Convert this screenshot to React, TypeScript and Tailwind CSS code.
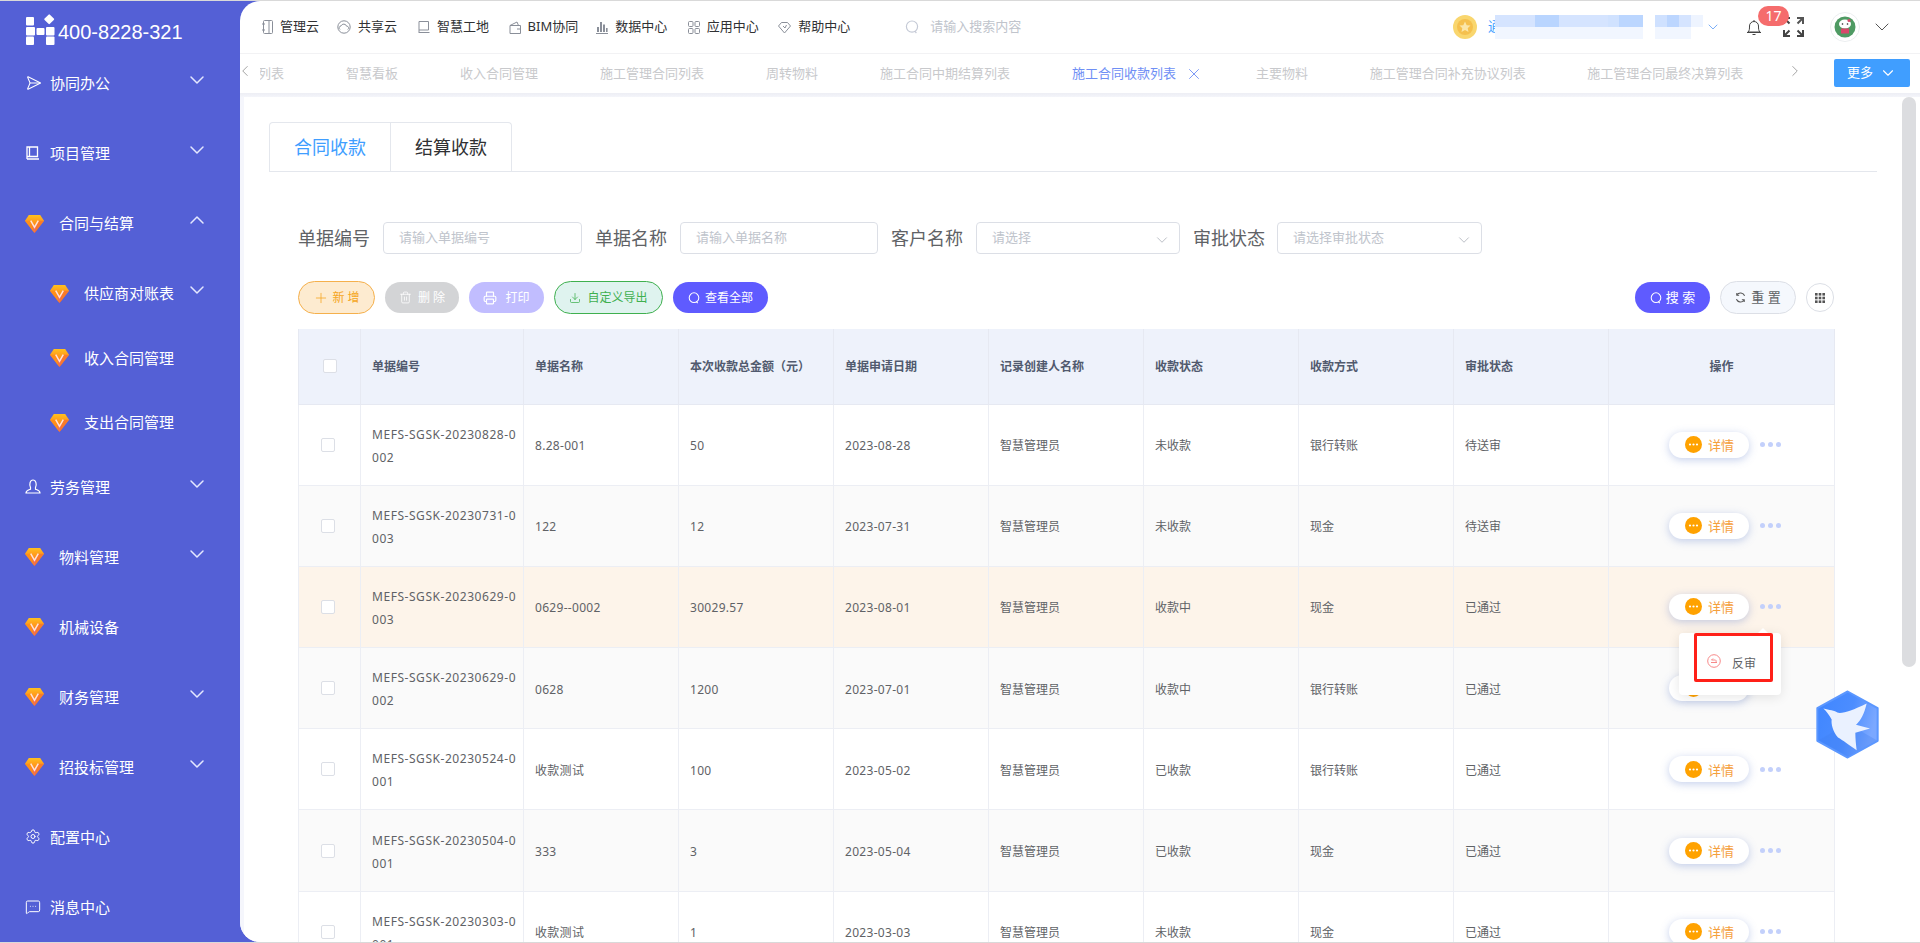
import React from "react";
import { ChevronDown, ChevronUp, ChevronLeft, ChevronRight, Send, Settings, MessageSquareMore, Plus, Trash2, Printer, Download, X } from "lucide-react";

function Gem() {
  return (
    <svg width="19" height="19" viewBox="0 0 20 20" className="shrink-0">
      <defs>
        <linearGradient id="gemG" x1="0" y1="0" x2="0" y2="1">
          <stop offset="0" stopColor="#ffc11e" />
          <stop offset="0.55" stopColor="#ff8a1c" />
          <stop offset="1" stopColor="#ee5a3c" />
        </linearGradient>
      </defs>
      <polygon points="4,1 16,1 20,7 10,20 0,7" fill="url(#gemG)" />
      <polygon points="0,7 6,7 10,20" fill="#ff8f17" />
      <polygon points="20,7 14,7 10,20" fill="#f97a2a" />
      <polygon points="6,7 10,14 14,7 10,20" fill="#f0705a" />
      <path d="M6 7 L10 14 L14 7" fill="none" stroke="#ffe5d8" strokeWidth="1.6" />
    </svg>
  );
}

function Q({ className = "" }: { className?: string }) {
  return (
    <svg viewBox="0 0 14 14" className={className} fill="none" stroke="currentColor" strokeWidth="1.2">
      <circle cx="7" cy="6.6" r="5.6" />
      <path d="M9.8 11.2 L11.4 13" />
    </svg>
  );
}

const ic = "shrink-0 text-[#8a8f99]";
const topNav: { label: string; icon: React.ReactNode; gap: string }[] = [
  {
    label: "管理云",
    gap: "mr-[18px]",
    icon: (
      <svg width="11" height="14" viewBox="0 0 11 14" fill="none" stroke="currentColor" className={ic}>
        <rect x="1.5" y="0.5" width="9" height="13" rx="1" />
        <path d="M7 1v12M0 4h3M0 10h3" />
      </svg>
    ),
  },
  {
    label: "共享云",
    gap: "mr-[21px]",
    icon: (
      <svg width="14" height="14" viewBox="0 0 14 14" fill="none" stroke="currentColor" className={ic}>
        <circle cx="7" cy="7" r="6.2" />
        <path d="M3 9.5a2 2 0 0 1 1-3.6 3 3 0 0 1 5.6 0.3 1.8 1.8 0 0 1 1.2 3.3" />
      </svg>
    ),
  },
  {
    label: "智慧工地",
    gap: "mr-[19.5px]",
    icon: (
      <svg width="12" height="14" viewBox="0 0 12 14" fill="none" stroke="currentColor" className={ic}>
        <path d="M1 13V1.5h9.5V10H1M1 12.5h10.5" />
      </svg>
    ),
  },
  {
    label: "BIM协同",
    gap: "mr-[18px]",
    icon: (
      <svg width="12" height="13" viewBox="0 0 12 13" fill="none" stroke="currentColor" className={ic}>
        <path d="M1 4.5h10.5v8H1zM1 4.5 8 1l1.5 3.5M8 8h3.5" />
      </svg>
    ),
  },
  {
    label: "数据中心",
    gap: "mr-[20.5px]",
    icon: (
      <svg width="12" height="13" viewBox="0 0 12 13" fill="currentColor" className={ic}>
        <rect x="1" y="6" width="2" height="5" />
        <rect x="4" y="1" width="2" height="10" />
        <rect x="7" y="3.5" width="2" height="7.5" />
        <rect x="10" y="7" width="1.6" height="4" />
        <rect x="0" y="12" width="12" height="1" />
      </svg>
    ),
  },
  {
    label: "应用中心",
    gap: "mr-[19.5px]",
    icon: (
      <svg width="12" height="13" viewBox="0 0 12 13" fill="none" stroke="currentColor" className={ic}>
        <rect x="0.5" y="0.5" width="4.5" height="5" rx="1" />
        <rect x="7" y="0.5" width="4.5" height="5" rx="1" />
        <rect x="0.5" y="7.5" width="4.5" height="5" rx="1" />
        <rect x="7" y="7.5" width="4.5" height="5" rx="1" />
      </svg>
    ),
  },
  {
    label: "帮助中心",
    gap: "mr-[55px]",
    icon: (
      <svg width="13" height="13" viewBox="0 0 13 13" fill="none" stroke="currentColor" className={ic}>
        <path d="M3.5 1.5h6l3 3.5-6 7-6-7zM5 5l2 2 1.5-3" />
      </svg>
    ),
  },
];

const tabsList = ["列表", "智慧看板", "收入合同管理", "施工管理合同列表", "周转物料", "施工合同中期结算列表"];
const tabsList2 = ["主要物料", "施工管理合同补充协议列表", "施工管理合同最终决算列表"];

const side1 = [
  { label: "协同办公", icon: <Send size={18} strokeWidth={1.5} className="rotate-45 -translate-x-[2px]" /> },
  {
    label: "项目管理",
    icon: (
      <svg width="14" height="14" viewBox="0 0 14 14" fill="none" stroke="currentColor" strokeWidth="1.3">
        <path d="M1 13V1h10.5v9.5H1M1 13h12" />
        <path d="M3.5 1v9" />
      </svg>
    ),
  },
];
const side2 = [
  {
    label: "劳务管理",
    icon: (
      <svg width="16" height="15" viewBox="0 0 16 15" fill="none" stroke="currentColor" strokeWidth="1.2">
        <path d="M5.5 8.500C4 5.500 5 1 8 1s4 4.500 2.500 7.500L10.500 10.200C12.500 11 15 11.500 15 14H1C1 11.500 3.500 11 5.500 10.200Z" />
      </svg>
    ),
    chev: true,
    gem: false,
  },
  { label: "物料管理", gem: true, chev: true },
  { label: "机械设备", gem: true, chev: false },
  { label: "财务管理", gem: true, chev: true },
  { label: "招投标管理", gem: true, chev: true },
  { label: "配置中心", icon: <Settings size={17} strokeWidth={1.5} />, chev: false, gem: false },
  { label: "消息中心", icon: <MessageSquareMore size={18} strokeWidth={1.5} />, chev: false, gem: false },
];

const Chev = ({ up }: { up?: boolean }) =>
  up ? (
    <ChevronUp size={24} strokeWidth={1.5} className="ml-auto mr-[31px] -mt-[6px] shrink-0 text-[#e4e8ff]" />
  ) : (
    <ChevronDown size={24} strokeWidth={1.5} className="ml-auto mr-[31px] -mt-[6px] shrink-0 text-[#e4e8ff]" />
  );

const rows = [
  ["MEFS-SGSK-20230828-0", "002", "8.28-001", "50", "2023-08-28", "未收款", "银行转账", "待送审"],
  ["MEFS-SGSK-20230731-0", "003", "122", "12", "2023-07-31", "未收款", "现金", "待送审"],
  ["MEFS-SGSK-20230629-0", "003", "0629--0002", "30029.57", "2023-08-01", "收款中", "现金", "已通过"],
  ["MEFS-SGSK-20230629-0", "002", "0628", "1200", "2023-07-01", "收款中", "银行转账", "已通过"],
  ["MEFS-SGSK-20230524-0", "001", "收款测试", "100", "2023-05-02", "已收款", "银行转账", "已通过"],
  ["MEFS-SGSK-20230504-0", "001", "333", "3", "2023-05-04", "已收款", "现金", "已通过"],
  ["MEFS-SGSK-20230303-0", "001", "收款测试", "1", "2023-03-03", "未收款", "现金", "已通过"],
];
const rowBg = ["bg-white", "bg-[#fafafa]", "bg-[#fdf4ea]", "bg-[#fafafa]", "bg-white", "bg-[#fafafa]", "bg-white"];
const heads = ["单据编号", "单据名称", "本次收款总金额（元）", "单据申请日期", "记录创建人名称", "收款状态", "收款方式", "审批状态"];
const th = "border-r border-b border-[#e6e9f2] pl-[11px] pt-[2px] text-left font-bold text-[12px] text-[#515a6e]";
const td = "border-r border-b border-[#eceef4] pl-[11px] pt-[2px] text-[12px] text-[#606266] leading-[23px]";

const mosaic1 = [
  "w-[40px] bg-[#d5e4ff]",
  "w-[24px] bg-[#b9d5ff]",
  "w-[49px] bg-[#d5e4ff]",
  "w-[11px] bg-[#d0e2ff]",
  "w-[24px] bg-[#bbd6ff]",
  "w-[12px] bg-white",
  "w-[12px] bg-[#cfe1ff]",
  "w-[12px] bg-[#bcd6ff]",
  "w-[12px] bg-[#d5e4ff]",
  "w-[12px] bg-[#eef4ff]",
];
const mosaic2 = ["w-[148px] bg-[#f1f6ff]", "w-[12px] bg-white", "w-[36px] bg-[#f1f6ff]"];

function Field({ label, ph, select, labelW, w, ml }: { label: string; ph: string; select?: boolean; labelW: string; w: string; ml: string }) {
  return (
    <>
      <span className={`text-[18px] leading-[32px] text-[#606266] shrink-0 ${labelW} ${ml}`}>{label}</span>
      <div className={`h-[32px] ${w} shrink-0 border border-[#dcdfe6] rounded-[4px] bg-white flex items-center pl-[15px] pr-[8px] text-[13px] text-[#c0c4cc]`}>
        <span>{ph}</span>
        {select && <ChevronDown size={18} strokeWidth={1.2} className="ml-auto mt-[3px] text-[#b4b8c0]" />}
      </div>
    </>
  );
}

export default function App() {
  return (
    <div className="relative h-[943px] w-[1920px] overflow-hidden flex flex-col bg-[#5460d6] [font-family:'Noto_Sans','Noto_Sans_CJK_SC',sans-serif]">
      <div className="h-px shrink-0 bg-[#d9d9d9]" />
      <div className="flex flex-1 min-h-0">
        {/* sidebar */}
        <aside className="w-[240px] shrink-0 text-white text-[15px]">
          <div className="h-[47px] pl-[25px] pt-[13px] flex items-start">
            <svg width="31" height="31" viewBox="0 0 31 31" fill="#fff" className="shrink-0">
              <rect x="1" y="3" width="8" height="8.5" rx="1" />
              <rect x="1" y="13" width="9" height="8.5" rx="1" />
              <rect x="11.5" y="14" width="8" height="7" rx="1" />
              <rect x="21" y="13" width="8.5" height="8.5" rx="1" />
              <rect x="1" y="22.5" width="8" height="8.5" rx="1" />
              <rect x="21" y="22.5" width="8.5" height="8.5" rx="1" />
              <rect x="20.5" y="1.5" width="7.5" height="7.5" rx="1" transform="rotate(45 24.2 5.2)" />
            </svg>
            <span className="ml-[2px] mt-[5px] text-[20px] leading-[26px] [font-family:'Liberation_Sans',Arial,sans-serif]">400-8228-321</span>
          </div>
          {side1.map((s) => (
            <div key={s.label} className="h-[70px] flex items-center pl-[25px]">
              <span className="w-[16px] mr-[9px] flex justify-center shrink-0">{s.icon}</span>
              <span>{s.label}</span>
              <Chev />
            </div>
          ))}
          <div className="h-[70px] flex items-center pl-[25px]">
            <Gem />
            <span className="ml-[15px]">合同与结算</span>
            <Chev up />
          </div>
          {["供应商对账表", "收入合同管理", "支出合同管理"].map((l, i) => (
            <div key={l} className="h-[64.67px] pt-[6px] flex items-center pl-[50px]">
              <Gem />
              <span className="ml-[15px]">{l}</span>
              {i === 0 && <Chev />}
            </div>
          ))}
          {side2.map((s) => (
            <div key={s.label} className="h-[70px] flex items-center pl-[25px]">
              {s.gem ? (
                <>
                  <Gem />
                  <span className="ml-[15px]">{s.label}</span>
                </>
              ) : (
                <>
                  <span className="w-[16px] mr-[9px] flex justify-center shrink-0">{s.icon}</span>
                  <span>{s.label}</span>
                </>
              )}
              {s.chev && <Chev />}
            </div>
          ))}
        </aside>

        {/* main */}
        <main className="flex-1 min-w-0 flex flex-col bg-white rounded-l-[20px] overflow-hidden">
          <header className="h-[53px] shrink-0 border-b border-[#f2f2f4] flex items-center pl-[22px] text-[13px] text-[#303133]">
            {topNav.map((n) => (
              <div key={n.label} className={`flex items-center gap-[7px] ${n.gap}`}>
                {n.icon}
                <span>{n.label}</span>
              </div>
            ))}
            <Q className="w-[14px] h-[14px] text-[#c5cad6]" />
            <span className="ml-[11px] text-[#c0c4cc]">请输入搜索内容</span>
            <div className="ml-auto flex items-center">
              <svg width="24" height="24" viewBox="0 0 24 24" className="shrink-0">
                <circle cx="12" cy="12" r="12" fill="#f9d66e" />
                <circle cx="12" cy="12" r="8" fill="#f5c04d" />
                <polygon points="12,6.5 13.7,10.2 17.5,10.6 14.7,13.2 15.5,17 12,15 8.5,17 9.3,13.2 6.5,10.6 10.3,10.2" fill="#fbe6a8" />
              </svg>
              <span className="ml-[11px] w-[13px] shrink-0 text-[#409eff]">通</span>
              <div className="relative -ml-[6px] h-[24px] w-[208px] flex flex-col">
                <div className="h-[12px] flex">
                  {mosaic1.map((c, i) => (
                    <div key={i} className={c} />
                  ))}
                </div>
                <div className="h-[12px] flex">
                  {mosaic2.map((c, i) => (
                    <div key={i} className={c} />
                  ))}
                </div>
              </div>
              <ChevronDown size={16} strokeWidth={1.2} className="ml-[2px] text-[#5b9bf5]" />
              <div className="relative ml-[26px] mr-[22px]">
                <svg width="14" height="15" viewBox="0 0 14 15" fill="none" stroke="#444" strokeWidth="1" className="block">
                  <path d="M1 12c1.500-1.500 1.500-3 1.500-6a4.500 4.500 0 0 1 9 0c0 3 0 4.500 1.500 6zM0 12.500h14M5.500 14.500h3M7 0v1.500" />
                </svg>
                <span className="absolute -top-[14px] left-[11px] w-[31px] h-[20px] rounded-full bg-[#f56c6c] text-white text-[14px] leading-[20px] text-center">17</span>
              </div>
              <svg width="21" height="20" viewBox="0 0 21 20" fill="none" stroke="#444" strokeWidth="2" className="shrink-0">
                <path d="M1 7V1h6M1 1l5.500 5.500" />
                <path d="M20 7V1h-6M20 1l-5.500 5.500" stroke="#555" />
                <path d="M1 13v6h6M1 19l5.500-5.500" />
                <path d="M20 13v6h-6M20 19l-5.500-5.500" />
              </svg>
              <svg width="30" height="30" viewBox="0 0 30 30" className="ml-[26px] shrink-0">
                <circle cx="15" cy="15" r="14.500" fill="#fff" stroke="#eceef0" />
                <circle cx="15" cy="15" r="10.500" fill="#4f9a63" />
                <ellipse cx="15" cy="12" rx="6" ry="4.500" fill="#fff" />
                <rect x="11" y="16.500" width="8" height="5" fill="#d9486a" />
                <circle cx="12.500" cy="12" r="0.800" fill="#222" />
                <circle cx="17.500" cy="12" r="0.800" fill="#222" />
                <circle cx="19" cy="8.500" r="1.500" fill="#d9486a" />
              </svg>
              <ChevronDown size={24} strokeWidth={1} className="ml-[10px] mr-[26px] text-[#555]" />
            </div>
          </header>

          <div className="h-[39px] shrink-0 flex items-center">
            <ChevronLeft size={18} strokeWidth={1.2} className="-ml-[4px] -mt-[6px] shrink-0 text-[#9a9a9a]" />
            <div className="ml-[6px] w-[1526px] overflow-hidden">
              <div className="-ml-[2px] flex items-center text-[13px] text-[#c8c9cc] whitespace-nowrap">
                {tabsList.map((t) => (
                  <span key={t} className="mr-[62px]">
                    {t}
                  </span>
                ))}
                <span className="text-[#6f8ff5]">施工合同收款列表</span>
                <X size={18} strokeWidth={1.2} className="ml-[9px] mr-[53px] text-[#6f8ff5] shrink-0" />
                {tabsList2.map((t) => (
                  <span key={t} className="mr-[61.5px]">
                    {t}
                  </span>
                ))}
              </div>
            </div>
            <ChevronRight size={18} strokeWidth={1.2} className="-mt-[6px] shrink-0 text-[#9a9a9a]" />
            <button className="ml-[30px] -mt-[2px] w-[76px] h-[28px] bg-[#409eff] rounded-[2px] text-white text-[13px] flex items-center justify-center gap-[6px]">
              更多
              <ChevronDown size={18} strokeWidth={1.5} />
            </button>
          </div>
          <div className="h-[4px] shrink-0 bg-gradient-to-b from-[#edeef4] to-[#f4f5fa]" />

          <div className="flex flex-1 min-h-0">
            <div className="w-[4px] shrink-0 bg-[#f5f6fc]" />
            <div className="flex-1 min-w-0 pt-[25px] overflow-hidden bg-white">
              <div className="ml-[25px] w-[1608px] h-[50px] border-b border-[#e4e7ed] flex">
                <div className="w-[122px] h-[50px] border border-[#e4e7ed] border-b-0 rounded-tl-[4px] flex items-center justify-center text-[18px] text-[#409eff]">合同收款</div>
                <div className="w-[121px] h-[50px] border-t border-r border-[#e4e7ed] rounded-tr-[4px] flex items-center justify-center text-[18px] text-[#303133]">结算收款</div>
              </div>

              <div className="ml-[54px] mt-[50px] flex items-center">
                <Field label="单据编号" ph="请输入单据编号" labelW="w-[85px]" w="w-[199px]" ml="" />
                <Field label="单据名称" ph="请输入单据名称" labelW="w-[85px]" w="w-[198px]" ml="ml-[13px]" />
                <Field label="客户名称" ph="请选择" select labelW="w-[85px]" w="w-[204px]" ml="ml-[13px]" />
                <Field label="审批状态" ph="请选择审批状态" select labelW="w-[84px]" w="w-[205px]" ml="ml-[13px]" />
              </div>

              <div className="ml-[54px] mt-[27px] w-[1536px] h-[33px] flex items-center text-[12px]">
                <button className="w-[77px] h-[33px] rounded-full border border-[#f5b04c] bg-[#fdebd0] text-[#f5a623] flex items-center justify-center gap-[3px]">
                  <Plus size={16} strokeWidth={1.2} />
                  <span>新 增</span>
                </button>
                <button className="ml-[10px] w-[74px] h-[31px] rounded-full bg-[#d3d4d6] text-white flex items-center justify-center gap-[6px]">
                  <Trash2 size={13} strokeWidth={1.5} />
                  <span>删 除</span>
                </button>
                <button className="ml-[10px] w-[75px] h-[31px] rounded-full bg-[#c1bdff] text-white flex items-center justify-center gap-[8px]">
                  <Printer size={14} strokeWidth={2} />
                  <span>打印</span>
                </button>
                <button className="ml-[10px] w-[109px] h-[33px] rounded-full border border-[#3fb04f] bg-[#dff3ef] text-[#3fb04f] flex items-center justify-center gap-[6px]">
                  <Download size={12} strokeWidth={1.5} />
                  <span>自定义导出</span>
                </button>
                <button className="ml-[10px] w-[95px] h-[31px] rounded-full bg-[#5f5bff] text-white flex items-center justify-center gap-[5px]">
                  <Q className="w-[12px] h-[12px]" />
                  <span>查看全部</span>
                </button>
                <button className="ml-auto w-[75px] h-[31px] rounded-full bg-[#5f5bff] text-white flex items-center justify-center gap-[4px] text-[13px]">
                  <Q className="w-[12px] h-[12px]" />
                  <span>搜 索</span>
                </button>
                <button className="ml-[10px] w-[76px] h-[33px] rounded-full border border-[#dcdfe6] bg-[#f5f8fd] text-[#606266] flex items-center justify-center gap-[5px] text-[13px]">
                  <svg width="11" height="11" viewBox="0 0 12 12" fill="none" stroke="#555" strokeWidth="1.2">
                    <path d="M10.500 4A5 5 0 0 0 2 3M1.500 8A5 5 0 0 0 10 9" />
                    <path d="M2 1v2.500h2.500M10 11V8.500H7.500" />
                  </svg>
                  <span>重 置</span>
                </button>
                <button className="ml-[10px] w-[28px] h-[29px] rounded-full border border-[#dcdfe6] bg-white flex items-center justify-center">
                  <svg width="10" height="10" viewBox="0 0 10 10" fill="#555">
                    <rect x="0" y="0" width="2.600" height="2.600" />
                    <rect x="3.700" y="0" width="2.600" height="2.600" />
                    <rect x="7.400" y="0" width="2.600" height="2.600" />
                    <rect x="0" y="3.700" width="2.600" height="2.600" />
                    <rect x="3.700" y="3.700" width="2.600" height="2.600" />
                    <rect x="7.400" y="3.700" width="2.600" height="2.600" />
                    <rect x="0" y="7.400" width="2.600" height="2.600" />
                    <rect x="3.700" y="7.400" width="2.600" height="2.600" />
                    <rect x="7.400" y="7.400" width="2.600" height="2.600" />
                  </svg>
                </button>
              </div>

              <table className="ml-[54px] mt-[15px] w-[1536px] table-fixed border-collapse">
                <colgroup>
                  <col className="w-[62px]" />
                  <col className="w-[163px]" />
                  <col className="w-[155px]" />
                  <col className="w-[155px]" />
                  <col className="w-[155px]" />
                  <col className="w-[155px]" />
                  <col className="w-[155px]" />
                  <col className="w-[155px]" />
                  <col className="w-[155px]" />
                  <col className="w-[226px]" />
                </colgroup>
                <thead>
                  <tr className="h-[75px] bg-[#eef2fb]">
                    <th className="border-l border-b border-r border-[#e6e9f2] pl-[24px]">
                      <div className="w-[14px] h-[14px] rounded-[2px] border border-[#dcdfe6] bg-white" />
                    </th>
                    {heads.map((h) => (
                      <th key={h} className={th}>
                        {h}
                      </th>
                    ))}
                    <th className="border-r border-b border-[#e6e9f2] pt-[2px] text-center font-bold text-[12px] text-[#515a6e]">操作</th>
                  </tr>
                </thead>
                <tbody>
                  {rows.map((r, i) => (
                    <tr key={i} className={`h-[81.2px] ${rowBg[i]}`}>
                      <td className="border-l border-r border-b border-[#eceef4] pl-[22px]">
                        <div className="w-[14px] h-[14px] rounded-[2px] border border-[#dcdfe6] bg-white" />
                      </td>
                      <td className={`${td} tracking-[0.55px]`}>
                        {r[0]}
                        <br />
                        {r[1]}
                      </td>
                      <td className={`${td} tracking-[0.3px]`}>{r[2]}</td>
                      <td className={`${td} tracking-[0.3px]`}>{r[3]}</td>
                      <td className={`${td} tracking-[0.3px]`}>{r[4]}</td>
                      <td className={td}>智慧管理员</td>
                      <td className={td}>{r[5]}</td>
                      <td className={td}>{r[6]}</td>
                      <td className={td}>{r[7]}</td>
                      <td className="border-r border-b border-[#eceef4]">
                        <div className="pl-[60px] flex items-center">
                          <button className="w-[80px] h-[26px] rounded-full bg-white shadow-[0_2px_9px_rgba(90,120,200,0.35)] flex items-center pl-[16px] text-[13px] text-[#f5a03c]">
                            <svg width="17" height="17" viewBox="0 0 17 17" className="shrink-0">
                              <circle cx="8.500" cy="8.500" r="8.500" fill="#ffa200" />
                              <circle cx="5" cy="8.500" r="1.100" fill="#fff" />
                              <circle cx="8.500" cy="8.500" r="1.100" fill="#fff" />
                              <circle cx="12" cy="8.500" r="1.100" fill="#fff" />
                            </svg>
                            <span className="ml-[6px] pt-[2px]">详情</span>
                          </button>
                          <div className="ml-[11px] flex gap-[3px]">
                            <span className="w-[5px] h-[5px] rounded-full bg-[#c3d0fb]" />
                            <span className="w-[5px] h-[5px] rounded-full bg-[#c3d0fb]" />
                            <span className="w-[5px] h-[5px] rounded-full bg-[#c3d0fb]" />
                          </div>
                        </div>
                      </td>
                    </tr>
                  ))}
                </tbody>
              </table>
            </div>
            <div className="w-[18px] shrink-0 bg-white">
              <div className="w-[14px] h-[570px] rounded-full bg-[#dcdde0]" />
            </div>
          </div>
        </main>
      </div>
      <div className="h-px shrink-0 bg-[#d9d9d9]" />

      {/* popover */}
      <div className="absolute left-[1679px] top-[633px] w-[102px] h-[62px] bg-white rounded-[4px] shadow-[0_2px_12px_rgba(0,0,0,0.1)]">
        <div className="absolute -top-[5px] left-[78px] w-0 h-0 border-x-[6px] border-x-transparent border-b-[6px] border-b-white" />
        <div className="absolute left-[15px] top-0 w-[79px] h-[49px] border-[3px] border-[#ff2018] rounded-[2px] flex items-center pl-[10px] pt-[13px]">
          <svg width="14" height="14" viewBox="0 0 14 14" fill="none" stroke="#f78989" strokeWidth="1" className="shrink-0 -mt-[6px]">
            <circle cx="7" cy="7" r="6.300" />
            <path d="M4 8.500h6M4.500 6h4a1.500 1.500 0 0 1 0 2.500M4.500 6 6 4.500" />
          </svg>
          <span className="ml-[11px] text-[12px] text-[#606266]">反审</span>
        </div>
      </div>

      {/* floating bird */}
      <svg width="63" height="69" viewBox="0 0 189 206" className="absolute left-[1816px] top-[690px]">
        <defs>
          <linearGradient id="hexG" x1="0" y1="0" x2="1" y2="0.3">
            <stop offset="0" stopColor="#3f86ff" />
            <stop offset="0.6" stopColor="#4c8dff" />
            <stop offset="1" stopColor="#7ba8ff" />
          </linearGradient>
        </defs>
        <polygon points="95,4 185,54 185,152 95,202 4,152 4,54" fill="url(#hexG)" stroke="#5b97ff" strokeWidth="6" strokeLinejoin="round" />
        <polygon points="8,150 95,100 182,150 95,200" fill="#3f7ff0" opacity="0.3" />
        <path d="M22 55 C40 60 55 60 66 68 C85 70 110 60 152 40 C145 70 135 90 120 104 L162 115 L118 128 C118 145 120 165 122 180 C100 165 80 150 66 142 C50 125 45 100 47 88 C40 75 30 62 22 55 Z" fill="#eaf1ff" />
      </svg>
    </div>
  );
}
